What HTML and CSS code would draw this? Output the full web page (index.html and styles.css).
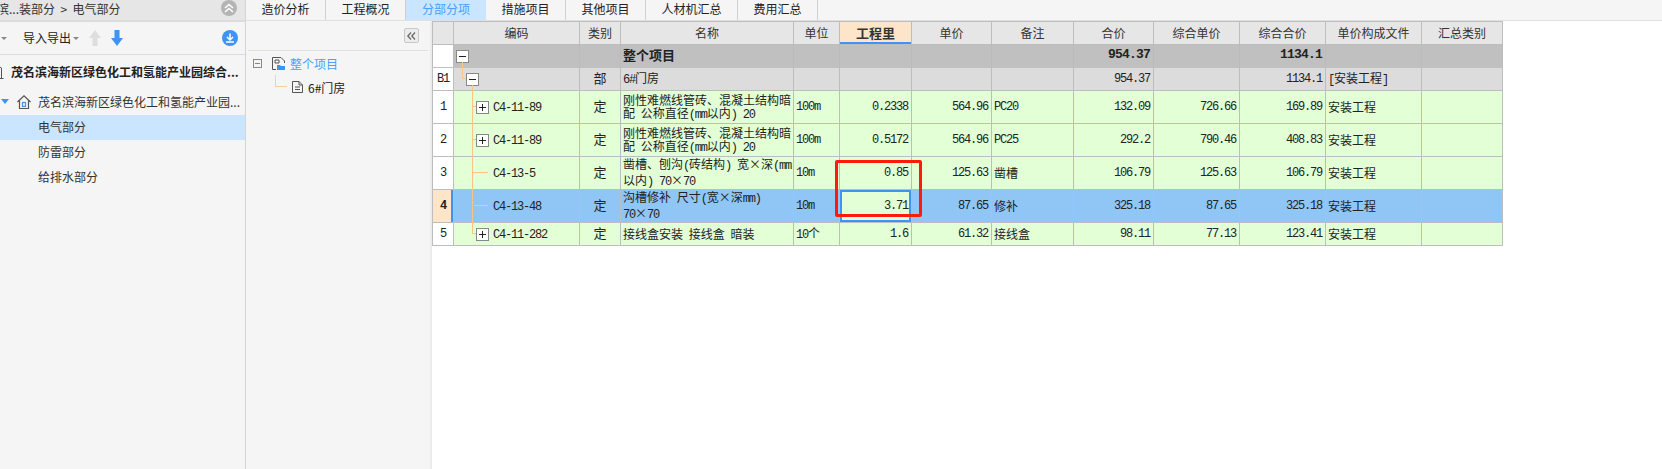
FILE: index.html
```html
<!DOCTYPE html>
<html lang="zh-CN">
<head>
  <meta charset="UTF-8" />
  <title>分部分项</title>
  <link rel="stylesheet" href="styles.css">
</head>
<body>
<div class="app">

  <div class="side">
    <div class="crumb">
      <span class="crumb-text">滨...装部分 &nbsp;&gt;&nbsp; 电气部分</span>
      <svg class="crumb-btn" width="16" height="16" viewBox="0 0 16 16">
        <circle cx="8" cy="8" r="8" fill="#b4b4b4"/>
        <path d="M4 8 L8 4.5 L12 8 M4 12 L8 8.5 L12 12" fill="none" stroke="#fff" stroke-width="1.5"/>
      </svg>
    </div>
    <div class="toolbar">
      <span class="caret cut"></span>
      <span class="tool-label">导入导出</span>
      <span class="caret"></span>
      <svg class="arrow-up" width="12" height="16" viewBox="0 0 12 16"><path d="M6 0 L12 8 H8.5 V16 H3.5 V8 H0 Z" fill="#dedede"/></svg>
      <svg class="arrow-down" width="12" height="16" viewBox="0 0 12 16"><path d="M3.5 0 H8.5 V8 H12 L6 16 L0 8 H3.5 Z" fill="#3d94f6"/></svg>
      <svg class="tool-end" width="16" height="16" viewBox="0 0 16 16">
        <circle cx="8" cy="8" r="8" fill="#3d94f6"/>
        <path d="M8 3.5 V9.5 M5 7 L8 10 L11 7 M4 12 H12" fill="none" stroke="#fff" stroke-width="1.5"/>
      </svg>
    </div>
    <div class="project">
      <svg class="building" width="14" height="14" viewBox="0 0 14 14"><path d="M2.5 13.5 V3 L7 .5 L11.5 3 V13.5 Z M.5 13.5 H13.5 M6 6 H8 V8 H6 Z" fill="none" stroke="#555"/></svg>
      <span>茂名滨海新区绿色化工和氢能产业园综合...</span>
    </div>
    <div class="unit">
      <span class="unit-caret"></span>
      <svg class="home" width="14" height="14" viewBox="0 0 14 14"><path d="M.5 7 L7 .8 L13.5 7 M2.5 5.5 V13.5 H11.5 V5.5" fill="none" stroke="#555" stroke-width="1.2"/><rect x="5.5" y="7.5" width="3" height="4" fill="none" stroke="#3d94f6" stroke-width="1.2"/></svg>
      <span>茂名滨海新区绿色化工和氢能产业园...</span>
    </div>
    <div class="node active">电气部分</div>
    <div class="node">防雷部分</div>
    <div class="node">给排水部分</div>
  </div>

  <div class="main">
    <div class="tabs">
      <div class="tab w80">造价分析</div>
      <div class="tab w80">工程概况</div>
      <div class="tab w80 current">分部分项</div>
      <div class="tab w80">措施项目</div>
      <div class="tab w80">其他项目</div>
      <div class="tab w92">人材机汇总</div>
      <div class="tab w80">费用汇总</div>
    </div>

    <div class="content">
      <div class="tree">
        <div class="tree-top">
          <div class="fold-btn">
            <svg width="9" height="8" viewBox="0 0 9 8"><path d="M4 .5 L.8 4 L4 7.5 M8 .5 L4.8 4 L8 7.5" fill="none" stroke="#666" stroke-width="1.2"/></svg>
          </div>
        </div>
        <div class="tree-root">
          <span class="tree-box"></span>
          <svg width="13" height="13" viewBox="0 0 13 13"><path d="M.5 12.5 V.5 H9 L12.5 4 V6 M.5 12.5 H4" fill="none" stroke="#555"/><path d="M3 3 H7 V6 H3 Z" fill="none" stroke="#555"/><path d="M5 8 H8 L9 9 H13 V13 H5 Z" fill="#3d94f6"/></svg>
          <span class="tree-name">整个项目</span>
        </div>
        <div class="tree-leaf">
          <span class="tree-elbow"></span>
          <svg width="11" height="12" viewBox="0 0 11 12"><path d="M.5 .5 H7 L10.5 4 V11.5 H.5 Z M7 .5 V4 H10.5 M3 6 H8 M3 8.5 H8" fill="none" stroke="#555"/></svg>
          <span class="leaf-name">6#门房</span>
        </div>
      </div>

      <div class="grid">
        <table class="sheet">
          <colgroup>
            <col class="c-no"><col class="c-code"><col class="c-type"><col class="c-name"><col class="c-unit"><col class="c-qty">
            <col class="c-price"><col class="c-note"><col class="c-total"><col class="c-cprice"><col class="c-ctotal"><col class="c-file"><col class="c-sum">
          </colgroup>
          <thead>
            <tr>
              <th></th><th>编码</th><th>类别</th><th>名称</th><th>单位</th><th class="sorted">工程里</th>
              <th>单价</th><th>备注</th><th>合价</th><th>综合单价</th><th>综合合价</th><th>单价构成文件</th><th>汇总类别</th>
            </tr>
          </thead>
          <tbody>
            <tr class="row-root">
              <td class="no"></td>
              <td class="lv0"><span class="box"></span></td>
              <td></td>
              <td class="name">整个项目</td>
              <td></td><td></td><td></td><td></td>
              <td class="num">954.37</td><td></td><td class="num">1134.1</td><td></td><td></td>
            </tr>
            <tr class="row-part">
              <td class="no m">B1</td>
              <td class="lv1"><span class="box"></span></td>
              <td class="ctr">部</td>
              <td class="name"><span class="m">6#</span>门房</td>
              <td></td><td></td><td></td><td></td>
              <td class="num">954.37</td><td></td><td class="num">1134.1</td><td class="txt"><span class="m">[</span>安装工程<span class="m">]</span></td><td></td>
            </tr>
            <tr class="row-item tall">
              <td class="no m">1</td>
              <td class="lv2"><span class="box plus"></span><span class="m">C4-11-89</span></td>
              <td class="ctr">定</td>
              <td class="name">刚性难燃线管砖、混凝土结构暗<br>配 公称直径<span class="m">(mm</span>以内<span class="m">) 20</span></td>
              <td class="txt m">100m</td>
              <td class="num">0.2338</td><td class="num">564.96</td><td class="txt m">PC20</td>
              <td class="num">132.09</td><td class="num">726.66</td><td class="num">169.89</td><td class="txt">安装工程</td><td></td>
            </tr>
            <tr class="row-item tall">
              <td class="no m">2</td>
              <td class="lv2"><span class="box plus"></span><span class="m">C4-11-89</span></td>
              <td class="ctr">定</td>
              <td class="name">刚性难燃线管砖、混凝土结构暗<br>配 公称直径<span class="m">(mm</span>以内<span class="m">) 20</span></td>
              <td class="txt m">100m</td>
              <td class="num">0.5172</td><td class="num">564.96</td><td class="txt m">PC25</td>
              <td class="num">292.2</td><td class="num">790.46</td><td class="num">408.83</td><td class="txt">安装工程</td><td></td>
            </tr>
            <tr class="row-item tall">
              <td class="no m">3</td>
              <td class="leaf"><span class="m">C4-13-5</span></td>
              <td class="ctr">定</td>
              <td class="name">凿槽、刨沟<span class="m">(</span>砖结构<span class="m">) </span>宽×深<span class="m">(mm</span><br>以内<span class="m">) 70</span>×<span class="m">70</span></td>
              <td class="txt m">10m</td>
              <td class="num">0.85</td><td class="num">125.63</td><td class="txt">凿槽</td>
              <td class="num">106.79</td><td class="num">125.63</td><td class="num">106.79</td><td class="txt">安装工程</td><td></td>
            </tr>
            <tr class="row-selected tall">
              <td class="no m">4</td>
              <td class="leaf"><span class="m">C4-13-48</span></td>
              <td class="ctr">定</td>
              <td class="name">沟槽修补 尺寸<span class="m">(</span>宽×深<span class="m">mm)</span><br><span class="m">70</span>×<span class="m">70</span></td>
              <td class="txt m">10m</td>
              <td class="num cell-focus">3.71</td><td class="num">87.65</td><td class="txt">修补</td>
              <td class="num">325.18</td><td class="num">87.65</td><td class="num">325.18</td><td class="txt">安装工程</td><td></td>
            </tr>
            <tr class="row-item">
              <td class="no m">5</td>
              <td class="lv2"><span class="box plus"></span><span class="m">C4-11-282</span></td>
              <td class="ctr">定</td>
              <td class="name">接线盒安装 接线盒 暗装</td>
              <td class="txt"><span class="m">10</span>个</td>
              <td class="num">1.6</td><td class="num">61.32</td><td class="txt">接线盒</td>
              <td class="num">98.11</td><td class="num">77.13</td><td class="num">123.41</td><td class="txt">安装工程</td><td></td>
            </tr>
          </tbody>
        </table>

        <!-- tree connector lines over the code column -->
        <svg class="tree-lines" width="70" height="225" viewBox="0 0 70 225">
          <path d="M30.5 41 V57.5 H34 M40.5 64 V212.5 H44 M40.5 85.5 H44 M40.5 118.5 H44 M40.5 151.5 H56 M40.5 184.5 H56" fill="none" stroke="#fcc482"/>
        </svg>
        <div class="mark"></div>
      </div>
    </div>
  </div>

</div>
</body>
</html>
```

FILE: styles.css
```css
* {
  box-sizing: border-box;
}

html, body {
  margin: 0;
  height: 100%;
}

body {
  font-family: "Noto Sans CJK SC", "Liberation Sans", sans-serif;
  font-size: 12px;
  color: #222;
  background: #fff;
  overflow: hidden;
}

.app {
  display: flex;
  height: 469px;
}

/* left panel */
.side {
  width: 246px;
  flex: none;
  background: #f5f5f5;
  border-right: 1px solid #d4d4d4;
  overflow: hidden;
}

.crumb {
  height: 22px;
  background: #e6e6e6;
  border-bottom: 2px solid #dcdcdc;
  display: flex;
  align-items: center;
  justify-content: space-between;
  padding-right: 8px;
  line-height: 16px;
}

.crumb-text {
  margin-left: -3px;
  margin-top: -3px;
  color: #333;
  white-space: nowrap;
}

.crumb-btn {
  margin-top: -5px;
}

.toolbar {
  height: 33px;
  border-bottom: 1px solid #dcdcdc;
  display: flex;
  align-items: center;
  padding-right: 7px;
}

.tool-label {
  margin-left: 16px;
  margin-top: -2px;
}

.caret {
  width: 0;
  height: 0;
  border-left: 3px solid transparent;
  border-right: 3px solid transparent;
  border-top: 3px solid #888;
  margin-left: 2px;
}

.caret.cut {
  margin-left: 1px;
}

.arrow-up {
  margin-left: 10px;
}

.arrow-down {
  margin-left: 10px;
}

.tool-end {
  margin-left: auto;
}

.project {
  height: 33px;
  display: flex;
  align-items: center;
  font-weight: 700;
  white-space: nowrap;
}

.building {
  margin-left: -10px;
  margin-right: 7px;
}

.unit {
  height: 27px;
  display: flex;
  align-items: center;
  white-space: nowrap;
  color: #333;
}

.unit-caret {
  width: 0;
  height: 0;
  margin-left: 1px;
  border-left: 4px solid transparent;
  border-right: 4px solid transparent;
  border-top: 5px solid #3d94f6;
}

.home {
  margin-left: 8px;
  margin-right: 7px;
}

.node {
  height: 25px;
  line-height: 24px;
  padding-left: 38px;
  color: #333;
}

.node.active {
  background: #c9e5ff;
}

/* tabs */
.main {
  flex: 1;
  display: flex;
  flex-direction: column;
  min-width: 0;
}

.tabs {
  height: 21px;
  flex: none;
  display: flex;
  background: #f5f5f5;
  border-bottom: 1px solid #e0e0e0;
}

.tab {
  height: 20px;
  line-height: 17px;
  text-align: center;
  border-right: 1px solid #cfcfcf;
}

.w80 {
  width: 80px;
}

.w92 {
  width: 92px;
}

.tab.current {
  background: #c9e5ff;
  color: #4a9eff;
  border-right: none;
}

.content {
  flex: 1;
  display: flex;
  min-height: 0;
}

/* middle tree */
.tree {
  width: 186px;
  flex: none;
  background: #f5f5f5;
  border-right: 2px solid #ebebeb;
  padding: 0 2px;
}

.tree-top {
  height: 30px;
  border-bottom: 1px solid #e0e0e0;
  display: flex;
  align-items: flex-start;
  justify-content: flex-end;
  padding: 7px 9px 0 0;
}

.fold-btn {
  width: 15px;
  height: 15px;
  background: #ececec;
  border: 1px solid #c8c8c8;
  border-radius: 2px;
  display: flex;
  align-items: center;
  justify-content: center;
}

.tree-root {
  display: flex;
  align-items: center;
  height: 18px;
  margin-top: 3px;
  padding-left: 5px;
}

.tree-box {
  width: 9px;
  height: 9px;
  margin-right: 10px;
  border: 1px solid #8a8a8a;
  background: linear-gradient(#3d94f6, #3d94f6) center / 5px 1px no-repeat;
}

.tree-name {
  margin-left: 5px;
  color: #4a9eff;
}

.tree-leaf {
  display: flex;
  align-items: flex-start;
  height: 24px;
  padding-left: 27px;
}

.tree-leaf svg {
  margin-left: 5px;
  margin-top: 9px;
}

.tree-elbow {
  width: 12px;
  height: 12px;
  margin-top: 3px;
  border-left: 1px solid #f7d09d;
  border-bottom: 1px solid #f7d09d;
}

.leaf-name {
  margin-left: 5px;
  margin-top: 7px;
}

/* bill table */
.grid {
  position: relative;
  flex: 1;
  background: #fff;
}

.sheet {
  table-layout: fixed;
  border-collapse: collapse;
  width: 1071px;
  color: #222;
}

.c-no { width: 21px; }
.c-code { width: 126px; }
.c-type { width: 41px; }
.c-name { width: 173px; }
.c-unit { width: 46px; }
.c-qty { width: 72px; }
.c-price { width: 80px; }
.c-note { width: 82px; }
.c-total { width: 80px; }
.c-cprice { width: 86px; }
.c-ctotal { width: 86px; }
.c-file { width: 96px; }
.c-sum { width: 81px; }

.sheet th,
.sheet td {
  border: 1px solid #bdbdbd;
  padding: 0 0 1px;
  height: 23px;
  line-height: 14px;
  white-space: nowrap;
  overflow: hidden;
}

.sheet th {
  background: #e6e6e6;
  font-weight: 400;
  text-align: center;
  color: #333;
}

.sheet th.sorted {
  background: #fde5c9;
  box-shadow: inset 0 -2px 0 #3d94f6;
  font-size: 13px;
  font-weight: 700;
}

.sheet tr.tall td {
  height: 33px;
}

.sheet tr.tall td.name {
  padding-bottom: 0;
  line-height: 13px;
}

.m {
  font-family: "Liberation Mono", monospace;
  font-size: 12px;
  letter-spacing: -1.2px;
  word-spacing: 0;
}

.no {
  text-align: center;
  background: #fff;
}

.sheet td.ctr {
  text-align: center;
  font-size: 13px;
  padding-bottom: 2px;
}

.sheet td.num {
  text-align: right;
  padding-right: 3px;
  font-family: "Liberation Mono", monospace;
  font-size: 12px;
  letter-spacing: -1.2px;
}

.sheet td.name {
  padding-left: 2px;
  word-spacing: 3px;
}

.sheet td.txt {
  padding-left: 2px;
}

.sheet td.lv0 { padding-left: 2px; }
.sheet td.lv1 { padding-left: 12px; }
.sheet td.lv2 { padding-left: 22px; }
.sheet td.leaf { padding-left: 39px; }

.box {
  display: inline-block;
  width: 13px;
  height: 13px;
  margin-right: 4px;
  vertical-align: middle;
  border: 1px solid #888;
  background: linear-gradient(#222, #222) center / 7px 1px no-repeat, #fff;
}

.box.plus {
  background: linear-gradient(#222, #222) center / 7px 1px no-repeat,
    linear-gradient(#222, #222) center / 1px 7px no-repeat, #fff;
}

.row-root td {
  background: #c0c0c0;
  border-color: #c0c0c0 #bbb #c0c0c0 #bbb;
}

.row-root td.no {
  background: #fff;
}

.sheet .row-root td.name {
  font-size: 13px;
  font-weight: 700;
  padding-bottom: 3px;
}

.sheet .row-root td.num {
  font-size: 13px;
  font-weight: 700;
  letter-spacing: -0.8px;
  padding-bottom: 3px;
}

.row-part td {
  background: #dcdcdc;
}

.row-part td.no {
  background: #fff;
}

.row-item td {
  background: #e3ffd6;
}

.row-item td.no {
  background: #fff;
}

.row-selected td {
  background: #90c6f6;
}

.row-selected td.no {
  background: #fde5c9;
  font-weight: 700;
  box-shadow: inset -2px 0 0 #3d94f6;
}

.sheet td.cell-focus {
  background: #e3ffd6;
  box-shadow: inset 0 0 0 2px #3d94f6;
}

.tree-lines {
  position: absolute;
  left: 0;
  top: 0;
  pointer-events: none;
}

.mark {
  position: absolute;
  left: 403px;
  top: 139px;
  width: 87px;
  height: 57px;
  border: 3px solid #ff1a0a;
  border-radius: 2px;
  pointer-events: none;
}
```
